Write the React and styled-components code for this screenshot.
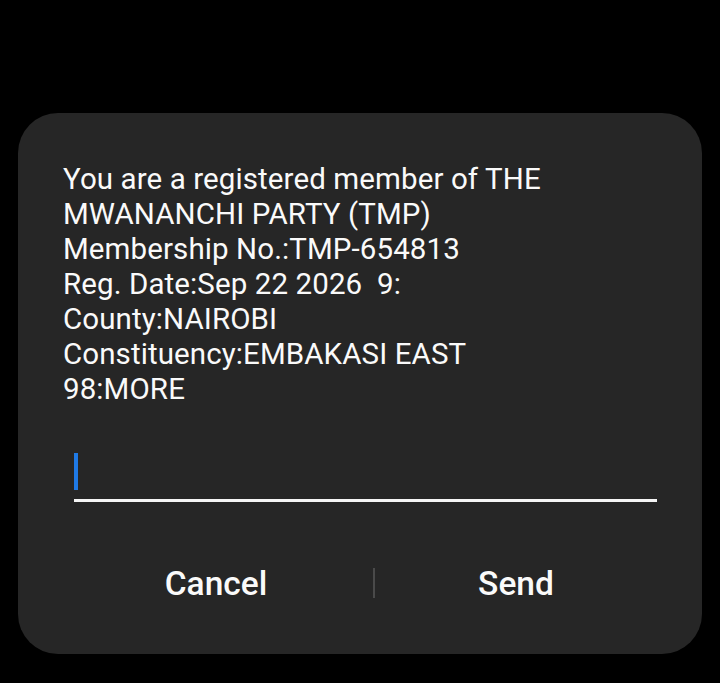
import React from "react"
import styled, { createGlobalStyle } from "styled-components"

const GlobalStyle = createGlobalStyle`
  html, body {
    margin: 0;
    padding: 0;
    background: #000;
    font-family: Roboto, "Noto Sans", sans-serif;
  }
`

const lines = [
  "You are a registered member of THE",
  "MWANANCHI PARTY (TMP)",
  "Membership No.:TMP-654813",
  "Reg. Date:Sep 22 2026  9:",
  "County:NAIROBI",
  "Constituency:EMBAKASI EAST",
  "98:MORE",
]

const App = () => {
  return (
    <>
      <GlobalStyle />
      <Screen>
        <Dialog>
          <Message>
            {lines.map((line, index) => (
              <Line key={index}>{line}</Line>
            ))}
          </Message>
          <InputField>
            <Cursor />
          </InputField>
          <Actions>
            <ActionButton>Cancel</ActionButton>
            <Divider />
            <ActionButton>Send</ActionButton>
          </Actions>
        </Dialog>
      </Screen>
    </>
  )
}

export default App

const Screen = styled.div`
  width: 720px;
  height: 683px;
  background: #000;
  padding: 113px 18px 0 18px;
  box-sizing: border-box;
`

const Dialog = styled.div`
  width: 684px;
  height: 541px;
  background: #262626;
  border-radius: 40px;
  box-sizing: border-box;
  padding: 49px 45px 0 45px;
  display: flex;
  flex-direction: column;
`

const Message = styled.div`
  color: #fafafa;
  font-size: 29.5px;
  letter-spacing: 0.1px;
  line-height: 35px;
`

const Line = styled.div`
  white-space: pre;
`

const InputField = styled.div`
  margin: 45px 0 0 11px;
  height: 47px;
  border-bottom: 3px solid #f5f5f5;
  display: flex;
  align-items: flex-start;
`

const Cursor = styled.div`
  width: 4px;
  height: 37px;
  margin-top: 1px;
  background: #1f7ae6;
`

const Actions = styled.div`
  margin: 57px 0 0 -4px;
  display: grid;
  grid-template-columns: 314px 2px 1fr;
  align-items: center;
  height: 48px;
`

const ActionButton = styled.div`
  color: #fafafa;
  font-size: 33.5px;
  font-weight: 500;
  text-align: center;
`

const Divider = styled.div`
  width: 2px;
  height: 30px;
  background: #4a4a4a;
`
